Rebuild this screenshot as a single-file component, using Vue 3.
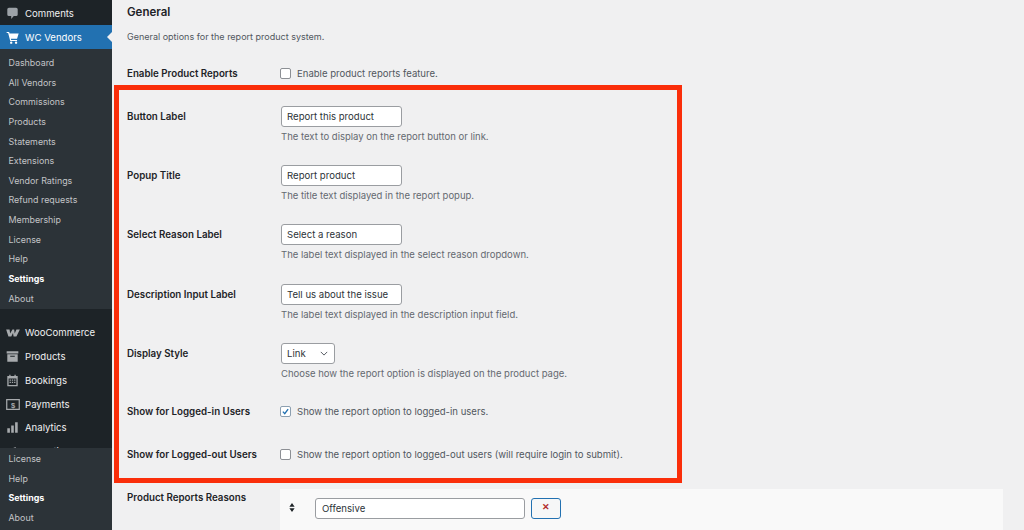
<script setup>
const topSub = ['Dashboard','All Vendors','Commissions','Products','Statements','Extensions','Vendor Ratings','Refund requests','Membership','License','Help','Settings','About']
const bottomSub = ['License','Help','Settings','About']
const inputs = [
  { label: 'Button Label', value: 'Report this product', hint: 'The text to display on the report button or link.' },
  { label: 'Popup Title', value: 'Report product', hint: 'The title text displayed in the report popup.' },
  { label: 'Select Reason Label', value: 'Select a reason', hint: 'The label text displayed in the select reason dropdown.' },
  { label: 'Description Input Label', value: 'Tell us about the issue', hint: 'The label text displayed in the description input field.' }
]
</script>

<template>
  <div class="page">
    <aside class="side">
      <div class="side-scroll">
        <div class="menu-item first">
          <svg class="ico" viewBox="0 0 20 20"><path fill="#9ca2a7" d="M4.500 1h11A2.500 2.500 0 0 1 18 3.500v8a2.500 2.500 0 0 1-2.500 2.500H12l-4 4.500V14H4.500A2.500 2.500 0 0 1 2 11.500v-8A2.500 2.500 0 0 1 4.500 1z"/></svg>
          <span>Comments</span>
        </div>
        <div class="menu-item current">
          <svg class="ico" viewBox="0 0 20 20"><path fill="#fff" d="M1 1.500h3.800l.7 2.500H19.500l-2.500 8H7.500l.5 1.800h9v1.700H6.500L3.300 3.200H1z"/><circle fill="#fff" cx="8" cy="18" r="1.800"/><circle fill="#fff" cx="15.500" cy="18" r="1.800"/></svg>
          <span>WC Vendors</span>
          <i class="notch"></i>
        </div>
        <ul class="sub">
          <li v-for="s in topSub" :key="s" :class="{ on: s === 'Settings' }">{{ s }}</li>
        </ul>
        <div class="group">
          <div class="menu-item">
            <svg class="ico woo" viewBox="0 0 24 14"><path fill="#a7aaad" d="M0 1h6l1 7 4-7h3l1 7 3-7h6l-6 12h-5l-1-6-3 6H4z"/></svg>
            <span>WooCommerce</span>
          </div>
          <div class="menu-item">
            <svg class="ico" viewBox="0 0 20 20"><path fill="#a7aaad" fill-rule="evenodd" d="M1 2h18v3.500H1zM2 6.500h16V18H2zM6.500 9v1.500h7V9z"/></svg>
            <span>Products</span>
          </div>
          <div class="menu-item">
            <svg class="ico" viewBox="0 0 20 20"><path fill="#a7aaad" fill-rule="evenodd" d="M5 1h2v2h6V1h2v2h3v16H2V3h3zM4 7v10h12V7zm1.500 1.500h2v2h-2zm3.500 0h2v2H9zm3.500 0h2v2h-2zM5.500 12h2v2h-2zM9 12h2v2H9zm3.500 0h2v2h-2z"/></svg>
            <span>Bookings</span>
          </div>
          <div class="menu-item">
            <svg class="ico wide-ico" viewBox="0 0 20 16"><path fill="#a7aaad" fill-rule="evenodd" d="M0 0h20v16H0zm1.800 1.800v12.400h16.400V1.800z"/><text x="10" y="12.500" text-anchor="middle" class="dollar">$</text></svg>
            <span>Payments</span>
          </div>
          <div class="menu-item">
            <svg class="ico" viewBox="0 0 20 20"><path fill="#a7aaad" d="M2 11h4v7H2zM8 7h4v11H8zM14 2h4v16h-4z"/></svg>
            <span>Analytics</span>
          </div>
          <div class="menu-item">
            <svg class="ico" viewBox="0 0 20 20"><path fill="#a7aaad" d="M3 8l12-5v12L3 11z"/></svg>
            <span>Marketing</span>
          </div>
        </div>
      </div>
      <ul class="sub bottom">
        <li v-for="s in bottomSub" :key="s" :class="{ on: s === 'Settings' }">{{ s }}</li>
      </ul>
    </aside>

    <main class="main">
      <h2 class="title">General</h2>
      <p class="intro">General options for the report product system.</p>

      <div class="row check-row enable">
        <div class="label">Enable Product Reports</div>
        <label class="check"><span class="box"></span>Enable product reports feature.</label>
      </div>

      <div v-for="r in inputs" :key="r.label" class="row field-row">
        <div class="label">{{ r.label }}</div>
        <div>
          <div class="input">{{ r.value }}</div>
          <p class="hint">{{ r.hint }}</p>
        </div>
      </div>

      <div class="row field-row">
        <div class="label">Display Style</div>
        <div>
          <div class="select">Link
            <svg viewBox="0 0 10 6" class="chev"><path d="M1 1l4 4 4-4" fill="none" stroke="#50575e" stroke-width="1.200"/></svg>
          </div>
          <p class="hint">Choose how the report option is displayed on the product page.</p>
        </div>
      </div>

      <div class="row check-row logged-in">
        <div class="label">Show for Logged-in Users</div>
        <label class="check"><span class="box checked">
          <svg viewBox="0 0 12 12"><path d="M2.500 6.200l2.500 2.600 4.500-6" fill="none" stroke="#2271b1" stroke-width="1.800"/></svg>
        </span>Show the report option to logged-in users.</label>
      </div>

      <div class="row check-row logged-out">
        <div class="label">Show for Logged-out Users</div>
        <label class="check"><span class="box"></span>Show the report option to logged-out users (will require login to submit).</label>
      </div>

      <div class="row reasons">
        <div class="label">Product Reports Reasons</div>
        <div class="reason-panel">
          <svg class="sort" viewBox="0 0 8 12"><path fill="#1d2327" d="M4 0l3.500 5h-7zM4 12L.5 7h7z"/></svg>
          <div class="input wide">Offensive</div>
          <div class="remove">✕</div>
        </div>
      </div>

      <div class="highlight"></div>
    </main>
  </div>
</template>

<style>
html, body { margin: 0; background: #f0f0f1; overflow: hidden; }
</style>

<style scoped>
.page {
  position: relative;
  display: flex;
  width: 1024px;
  height: 530px;
  overflow: hidden;
  background: #f0f0f1;
  font-family: Inter, "Liberation Sans", sans-serif;
  color: #50575e;
}
.side {
  flex: none;
  display: flex;
  flex-direction: column;
  width: 112px;
  height: 530px;
  overflow: hidden;
  background: #1d2327;
  font-size: 9.6px;
}
.side-scroll {
  flex: 1;
  min-height: 0;
  overflow: hidden;
}
.menu-item {
  display: flex;
  align-items: center;
  gap: 6px;
  height: 23.8px;
  padding-left: 6px;
  color: #f0f0f1;
  position: relative;
}
.menu-item.first { box-sizing: border-box; height: 25px; padding-top: 1px; }
.current { background: #2271b1; color: #fff; height: 24px; }
.ico { width: 13px; height: 13px; flex: none; }
.ico.woo { width: 14px; height: 8px; margin-right: -1px; }
.ico.wide-ico { width: 14px; height: 11px; margin-right: -1px; }
.notch {
  position: absolute;
  right: 0;
  top: 7px;
  border: 5px solid transparent;
  border-right-color: #f0f0f1;
  border-left-width: 0;
}
.dollar { font-size: 11px; font-weight: 700; fill: #a7aaad; font-family: "Liberation Sans", sans-serif; }
.sub {
  list-style: none;
  margin: 0;
  padding: 4px 0 1px;
  background: #2c3338;
  color: #c3c4c7;
  font-size: 8.900px;
}
.sub li {
  height: 19.65px;
  line-height: 19.65px;
  padding-left: 8.500px;
}
.sub .on { color: #fff; font-weight: 700; }
.group { padding-top: 11.500px; }
.bottom {
  flex: none;
  box-sizing: border-box;
  height: 82px;
  padding: 1px 0 0;
}
.main {
  position: relative;
  flex: 1;
  min-width: 0;
  padding-left: 15px;
  font-size: 9.7px;
}
.title {
  margin: 0;
  padding-top: 5px;
  height: 15px;
  line-height: 15px;
  font-size: 11.5px;
  font-weight: 600;
  color: #1d2327;
}
.intro {
  margin: 11px 0 0;
  height: 12px;
  line-height: 12px;
  font-size: 9px;
}
.row { display: flex; }
.label {
  flex: none;
  width: 154px;
  font-size: 9.750px;
  line-height: 13px;
  font-weight: 600;
  color: #1d2327;
}
.check-row { align-items: center; height: 14px; }
.enable { margin-top: 23px; }
.check {
  display: flex;
  align-items: center;
  gap: 6px;
  margin-left: -1px;
  font-size: 9.550px;
}
.box {
  box-sizing: border-box;
  display: block;
  width: 11px;
  height: 11px;
  border: 1px solid #8c8f94;
  border-radius: 2px;
  background: #fff;
}
.box svg { display: block; width: 9px; height: 9px; }
.checked { border-color: #8c9fb0; }
.field-row { height: 59.2px; }
.field-row .label { padding-top: 4px; }
.enable + .field-row { margin-top: 26px; }
.input {
  box-sizing: border-box;
  width: 121px;
  height: 21px;
  line-height: 20px;
  padding-left: 5px;
  background: #fff;
  border: 1px solid #9a9da1;
  border-radius: 3px;
  color: #2c3338;
  font-size: 9.6px;
}
.input.wide { width: 210px; flex: none; padding-left: 6px; }
.hint {
  margin: 4px 0 0;
  line-height: 12px;
  font-size: 9.500px;
  color: #646970;
}
.select {
  box-sizing: border-box;
  display: flex;
  align-items: center;
  justify-content: space-between;
  width: 54px;
  height: 21px;
  padding: 0 6px 0 5px;
  background: #fff;
  border: 1px solid #9a9da1;
  border-radius: 3px;
  color: #2c3338;
  font-size: 9.6px;
}
.chev { width: 8px; height: 5px; }
.logged-in { margin-top: 2.2px; }
.logged-out { margin-top: 29px; }
.reasons { margin-top: 28px; }
.reasons .label { width: 153px; padding-top: 2px; }
.reason-panel {
  flex: none;
  width: 723px;
  height: 60px;
  box-sizing: border-box;
  display: flex;
  align-items: flex-start;
  padding: 9px 0 0 9px;
  background: #f9f9f9;
}
.sort { flex: none; width: 6px; height: 9px; margin: 5px 20px 0 0; }
.remove {
  box-sizing: border-box;
  flex: none;
  width: 30px;
  height: 21px;
  margin-left: 6px;
  border: 1px solid #2271b1;
  border-radius: 3px;
  background: #f6f7f7;
  color: #b32d2e;
  font-size: 9px;
  font-weight: 700;
  line-height: 16px;
  text-align: center;
}
.highlight {
  position: absolute;
  left: 2px;
  top: 85px;
  width: 568px;
  height: 398px;
  box-sizing: border-box;
  border: 5px solid #fa2e0a;
  pointer-events: none;
}
</style>
